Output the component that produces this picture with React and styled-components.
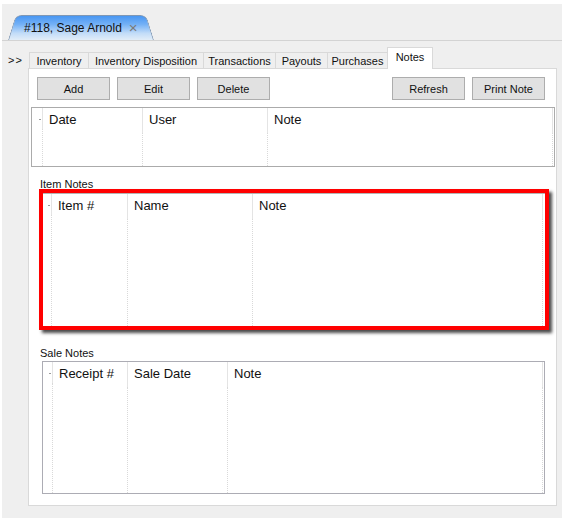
import React from "react";
import styled, {createGlobalStyle} from "styled-components";

const Global = createGlobalStyle`
  body {
    margin: 0;
    background: #ffffff;
    font-family: "Liberation Sans", Arial, sans-serif;
    color: #111;
  }
`;

const Frame = styled.div`
  margin: 4px 0 0 2px;
  width: 560px;
  height: 514px;
  background: #efefef;
  display: flex;
  flex-direction: column;
`;

const DocStrip = styled.div`
  height: 37px;
  border-bottom: 1px solid #d3d3d3;
  padding: 12px 0 0 6px;
  box-sizing: border-box;
  display: flex;
  align-items: flex-end;
`;

const DocTab = styled.div`
  position: relative;
  width: 145px;
  height: 25px;
  display: flex;
  align-items: center;
  padding-left: 16px;
  box-sizing: border-box;
  font-size: 12px;

  &::before,
  &::after {
    content: "";
    position: absolute;
    top: 0;
    bottom: 0;
    background: linear-gradient(#4896f2 0%, #74b1f6 35%, #c2dcf8 72%, #e2edf8 100%);
    border-top: 1px solid #7f97b4;
    transform-origin: bottom;
  }
  &::before {
    left: 0;
    right: 50%;
    border-left: 1px solid #7f97b4;
    border-top-left-radius: 6px;
    transform: skewX(-17deg);
  }
  &::after {
    left: 50%;
    right: 0;
    border-right: 1px solid #7f97b4;
    border-top-right-radius: 6px;
    transform: skewX(17deg);
  }
`;

const DocTitle = styled.span`
  position: relative;
  z-index: 1;
`;

const Close = styled.span`
  position: relative;
  z-index: 1;
  margin-left: 7px;
  color: #7a7a7a;
  font-size: 15px;
  line-height: 15px;
`;

const Body = styled.div`
  display: flex;
  padding-top: 6px;
`;

const Chevron = styled.div`
  width: 26px;
  padding: 7px 0 0 6px;
  box-sizing: border-box;
  font-size: 11px;
  letter-spacing: 1px;
`;

const Main = styled.div`
  display: flex;
  flex-direction: column;
  width: 529px;
`;

const TabRow = styled.div`
  height: 21px;
  padding-left: 1px;
  display: flex;
  align-items: flex-end;
`;

const Tab = styled.div`
  width: ${(p) => p.$w}px;
  height: ${(p) => (p.$active ? 22 : 16)}px;
  margin-bottom: ${(p) => (p.$active ? -1 : 0)}px;
  margin-left: -1px;
  box-sizing: border-box;
  border: 1px solid #d9d9d9;
  border-bottom: none;
  background: ${(p) => (p.$active ? "#ffffff" : "#efefef")};
  position: relative;
  z-index: ${(p) => (p.$active ? 2 : 1)};
  font-size: 11px;
  display: flex;
  justify-content: center;
  align-items: ${(p) => (p.$active ? "flex-start" : "center")};
  padding-top: ${(p) => (p.$active ? 3 : 0)}px;

  &:first-child {
    margin-left: 0;
  }
`;

const Panel = styled.div`
  height: 438px;
  box-sizing: border-box;
  background: #fff;
  border: 1px solid #d9d9d9;
  display: flex;
  flex-direction: column;
`;

const ButtonBar = styled.div`
  display: flex;
  justify-content: space-between;
  padding: 8px 11px 0 8px;
`;

const ButtonGroup = styled.div`
  display: flex;
  gap: 7px;
`;

const Button = styled.button`
  width: 73px;
  height: 23px;
  border: 1px solid #adadad;
  background: #e1e1e1;
  font-family: "Liberation Sans", Arial, sans-serif;
  font-size: 11px;
  color: #111;
  padding: 0;
`;

const Label = styled.div`
  font-size: 11px;
  line-height: 13px;
  height: 11px;
  margin: ${(p) => p.$top}px 0 0 11px;
`;

const Highlight = styled.div`
  width: 510px;
  height: 141px;
  margin-left: 10px;
  box-sizing: border-box;
  border: 4px solid #ff0000;
  box-shadow: 3px 3px 3px rgba(30, 30, 30, 0.8);
  display: flex;
`;

const Grid = styled.div`
  width: ${(p) => p.$w}px;
  height: ${(p) => p.$h}px;
  margin: ${(p) => p.$margin};
  box-sizing: border-box;
  border: ${(p) => (p.$plain ? "none" : `1px solid ${p.$line}`)};
  border-top: 1px solid ${(p) => p.$line};
  display: flex;
  flex: ${(p) => (p.$plain ? 1 : "none")};
`;

const Column = styled.div`
  width: ${(p) => p.$w}px;
  display: flex;
  flex-direction: column;
  flex: none;
`;

const Head = styled.div`
  height: 21px;
  border-right: 1px solid #e4e4e4;
  padding: 4px 0 0 6px;
  font-size: 13px;
  line-height: 16px;
  position: relative;
`;

const Cells = styled.div`
  flex: 1;
  border-right: 1px dotted #d9d9d9;
`;

const Tick = styled.span`
  position: absolute;
  right: 1px;
  top: 11px;
  width: 2px;
  height: 1px;
  background: #9a9a9a;
`;

const Filler = styled.div`
  flex: 1;
`;

const DataTable = ({columns, ...rest}) => (
  <Grid {...rest}>
    {columns.map(([w, title], i) => (
      <Column key={i} $w={w}>
        <Head style={i === 0 ? {padding: 0} : undefined}>
          {i === 0 ? <Tick /> : title}
        </Head>
        <Cells />
      </Column>
    ))}
    <Filler />
  </Grid>
);

const tabs = [
  ["Inventory", 60],
  ["Inventory Disposition", 116],
  ["Transactions", 73],
  ["Payouts", 53],
  ["Purchases", 61],
  ["Notes", 46, true],
];

const App = () => (
  <>
    <Global />
    <Frame>
      <DocStrip>
        <DocTab>
          <DocTitle>#118, Sage Arnold</DocTitle>
          <Close>×</Close>
        </DocTab>
      </DocStrip>
      <Body>
        <Chevron>&gt;&gt;</Chevron>
        <Main>
          <TabRow>
            {tabs.map(([name, w, active]) => (
              <Tab key={name} $w={w} $active={active}>
                {name}
              </Tab>
            ))}
          </TabRow>
          <Panel>
            <ButtonBar>
              <ButtonGroup>
                <Button>Add</Button>
                <Button>Edit</Button>
                <Button>Delete</Button>
              </ButtonGroup>
              <ButtonGroup>
                <Button>Refresh</Button>
                <Button>Print Note</Button>
              </ButtonGroup>
            </ButtonBar>
            <DataTable
              $w={524}
              $h={60}
              $margin="7px 0 0 2px"
              $line="#ababab"
              columns={[
                [11, ""],
                [100, "Date"],
                [125, "User"],
                [285, "Note"],
              ]}
            />
            <Label $top={11}>Item Notes</Label>
            <Highlight>
              <DataTable
                $plain
                $line="#b4b4b4"
                $margin="0"
                columns={[
                  [9, ""],
                  [76, "Item #"],
                  [125, "Name"],
                  [290, "Note"],
                ]}
              />
            </Highlight>
            <Label $top={17}>Sale Notes</Label>
            <DataTable
              $w={503}
              $h={133}
              $margin="3px 0 0 13px"
              $line="#acacb4"
              columns={[
                [10, ""],
                [75, "Receipt #"],
                [100, "Sale Date"],
                [315, "Note"],
              ]}
            />
          </Panel>
        </Main>
      </Body>
    </Frame>
  </>
);

export default App;
